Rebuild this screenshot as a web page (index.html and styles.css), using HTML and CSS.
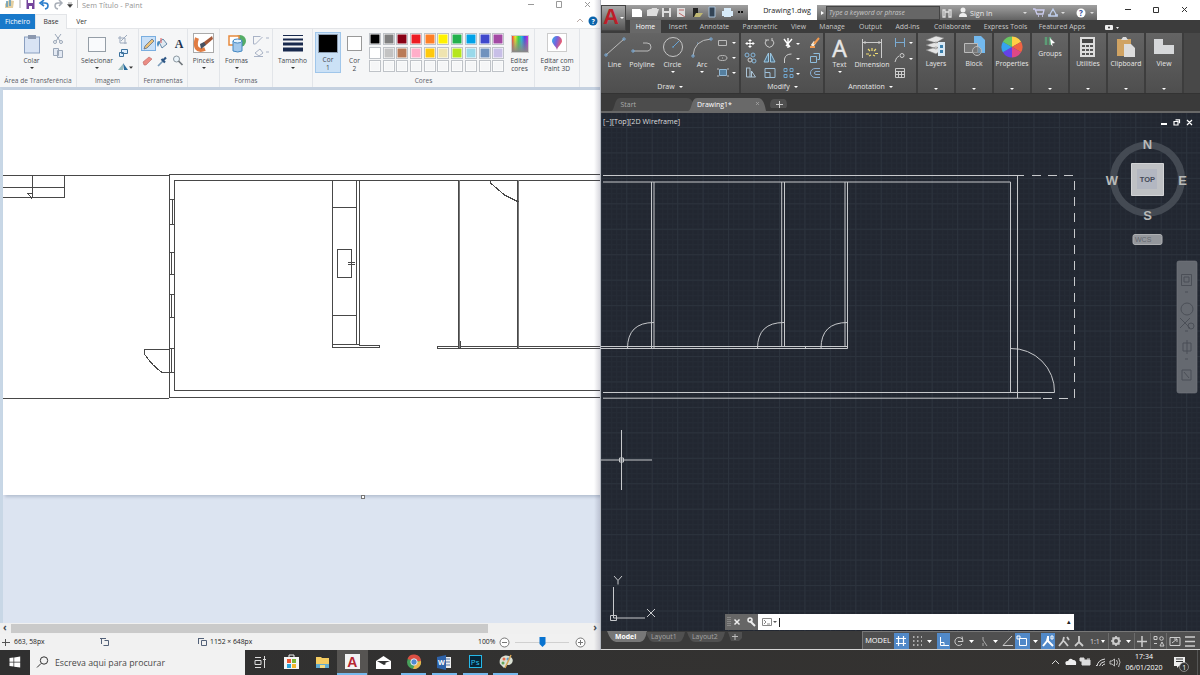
FILE: index.html
```html
<!DOCTYPE html>
<html lang="pt">
<head>
<meta charset="utf-8">
<title>Paint and AutoCAD</title>
<link rel="stylesheet" href="styles.css">
</head>
<body>
<div class="screen">
<section class="paint">
  <header class="p-title">
    <svg width="76" height="14" fill="none"><path d="M5 4l4-4 5 1-1 7H5z" fill="#e4cfa0"/><path d="M7 1v6M10 0v6" stroke="#5c9ac0" stroke-width="1.5"/><path d="M20 0v8" stroke="#aaa"/><rect x="26.500" y="0" width="8" height="9" fill="#74449c"/><path d="M28 0h5v3h-5zM29 6h3v3h-3z" fill="#fff"/><path d="M42 3h3c4 0 4 5 0 6M44 0l-4 3 4 3" stroke="#2d7fcc" stroke-width="1.600"/><path d="M61 3h-3c-4 0-4 5 0 6M59 0l3 3-3 3" stroke="#a9afb8" stroke-width="1.500"/><path d="M67.500 4.500h5l-2.500 3zM68 3h4" fill="#333" stroke="#444" stroke-width=".5"/></svg>
    <span class="p-name">Sem Título - Paint</span>
    <svg class="p-ctl" width="72" height="14" fill="none" stroke="#999"><path d="M0 4.500h6M28.500 1.500h5v6h-5zM57 2l5 5M62 2l-5 5"/></svg>
  </header>
  <nav class="p-tabs"><b>Ficheiro</b><span class="on">Base</span><span>Ver</span><svg width="24" height="15"><path d="M1 8l3-3 3 3" fill="none" stroke="#b9a9a5"/><circle cx="17" cy="7" r="4.500" fill="#0a64ad"/><text x="15.500" y="10" class="q">?</text></svg></nav>
  <div class="p-ribbon">
    <div class="grp"><div class="g2 clip"><div class="tool"><svg width="18" height="22" ><rect x="1.500" y="4" width="15" height="16" fill="#d8e3f4" stroke="#8a9fc0"/><rect x="5" y="2" width="8" height="4" fill="#8b98af"/></svg><em>Colar</em><i class="dn"></i></div><svg width="14" height="40" fill="none" stroke="#9ba7b8"><path d="M4 2l5 7M10 2l-5 7"/><circle cx="4" cy="10" r="1.500"/><circle cx="10" cy="10" r="1.500"/><path d="M2.500 16.500h5v7h-5zM6.500 18.500h5v7h-5z" fill="#e3e9f3"/></svg></div><p>Área de Transferência</p></div>
    <div class="grp"><div class="g2 img"><div class="tool"><svg width="20" height="22"><rect x="1.500" y="4.500" width="17" height="14" fill="#f9fafc" stroke="#345" stroke-dasharray="1 1"/></svg><em>Selecionar</em><i class="dn"></i></div><svg width="18" height="40" fill="none"><path d="M3 4v7h7M1 6h7v6M10 3L4 9" stroke="#9ba9bc"/><path d="M4.500 17.500h6v4h-6zM2.500 20.500h4v4h-4z" stroke="#3b719c" fill="#def"/><path d="M1 38l5-6v6z" fill="#9bb"/><path d="M6 31l5 7H7z" fill="#286b9c"/><path d="M12 34.500h4l-2 2.200z" fill="#333"/></svg></div><p>Imagem</p></div>
    <div class="grp"><div class="tools6">
      <span class="sel"><svg width="14" height="14"><path d="M2 12l1-3 7-7 2 2-7 7z" fill="#eac179" stroke="#52647c" stroke-width=".7"/></svg></span>
      <svg width="14" height="14"><path d="M3 6l4-3 4 5-5 4z" fill="#dfe9f1" stroke="#446f94" stroke-width=".8"/><path d="M2 5q-2 3 0 6l2-5" fill="#4889bd"/><path d="M5 2v5" stroke="#d55"/></svg>
      <b>A</b>
      <svg width="14" height="14"><path d="M2 8l6-5 3 2-6 6H3z" fill="#ea8c84" stroke="#bd6966" stroke-width=".6"/></svg>
      <svg width="14" height="14"><path d="M2 12l5-5" stroke="#7c9dbb" stroke-width="1.700"/><path d="M5.500 5l3.500 3.500M7 6.500l3-3" stroke="#2c5584" stroke-width="2.200"/></svg>
      <svg width="14" height="14" fill="none"><circle cx="5.500" cy="5" r="3" fill="#eaf4fa" stroke="#8a969f"/><path d="M7.500 7l4 4" stroke="#6f767b" stroke-width="1.700"/></svg>
    </div><p>Ferramentas</p></div>
    <div class="grp"><div class="tool"><svg width="22" height="22"><rect x=".5" y=".5" width="20" height="19" fill="#fff" stroke="#aaa"/><path d="M4 5c-3 9 0 14 8 11" stroke="#e17c42" stroke-width="4" fill="none"/><path d="M19 3l-8 6-3 4 5-1 7-6z" fill="#a55939"/><path d="M7 11l4-2 2 3-5 4z" fill="#475161"/></svg><em>Pincéis</em><i class="dn"></i></div><p></p></div>
    <div class="grp"><div class="g2 shp"><div class="tool"><svg width="20" height="22" fill="none"><circle cx="13" cy="8" r="6" fill="#55ad66"/><path d="M2 3h10v9H2z" fill="#fff" stroke="#e78a3e" stroke-width="1.500"/><path d="M6 8h9v10q-4 2-9 0z" fill="#a3c9ec" stroke="#4387c1"/><ellipse cx="10.500" cy="8" rx="4.500" ry="2" fill="#e4f3ff" stroke="#4387c1"/></svg><em>Formas</em><i class="dn"></i></div><svg width="18" height="40" fill="none" stroke="#a9b3c6"><path d="M.5 4.500h7M.5 4v8h2l7-7M13 6h3M2 21l5-4 3 4-4 3zM1 24.500h9M13 20h3"/></svg></div><p>Formas</p></div>
    <div class="grp"><div class="tool"><svg width="22" height="22" stroke="#18294d"><path d="M1 2.500h20"/><path d="M1 6.500h20" stroke-width="2"/><path d="M1 11h20" stroke-width="3"/><path d="M1 16.500h20" stroke-width="4"/></svg><em>Tamanho</em><i class="dn"></i></div><p></p></div>
    <div class="grp"><div class="cores">
      <div class="cor on"><s class="blk"></s><em>Cor<br>1</em></div><div class="cor"><s></s><em>Cor<br>2</em></div>
      <div class="pal"><i style="background:#000"></i><i style="background:#7f7f7f"></i><i style="background:#880015"></i><i style="background:#ed1c24"></i><i style="background:#ff7f27"></i><i style="background:#fff200"></i><i style="background:#22b14c"></i><i style="background:#00a2e8"></i><i style="background:#3f48cc"></i><i style="background:#a349a4"></i><i style="background:#fff"></i><i style="background:#c3c3c3"></i><i style="background:#b97a57"></i><i style="background:#ffaec9"></i><i style="background:#ffc90e"></i><i style="background:#efe4b0"></i><i style="background:#b5e61d"></i><i style="background:#99d9ea"></i><i style="background:#7092be"></i><i style="background:#c8bfe7"></i><i></i><i></i><i></i><i></i><i></i><i></i><i></i><i></i><i></i><i></i></div>
      <div class="cor"><s class="rain"></s><em>Editar<br>cores</em></div>
    </div><p>Cores</p></div>
    <div class="grp"><div class="cor p3d"><svg width="20" height="20"><defs><linearGradient id="pin" x2="1" y2=".4"><stop stop-color="#29b7ed"/><stop offset=".5" stop-color="#7762dc"/><stop offset="1" stop-color="#f25b67"/></linearGradient></defs><rect x=".5" y=".5" width="19" height="18" fill="#fff" stroke="#ccc"/><path d="M10 17c-1-4-5-6-5-9a5 5 0 0 1 10 0c0 3-4 5-5 9z" fill="url(#pin)"/></svg><em>Editar com<br>Paint 3D</em></div><p></p></div>
    <div></div>
  </div>
  <div class="p-work">
    <div class="paper"><svg width="597" height="405" viewBox="3 90 597 405" fill="none" stroke="#484848" shape-rendering="crispEdges">
      <path d="M3 175.500h166M3 187.500h61M3 197.500h61.500v-22M32.500 175v23M28 193.500h4l-4 0 4 5M3 398.500h166"/>
      <path d="M600 174.500H169.500v223H600M600 180.500H174.500v210H600"/>
      <path d="M172.500 199v25M169 199.500h5M169 224.500h5M171.500 252v22M169 252.500h5M169 274.500h5M171.500 294v23M169 294.500h5M169 317.500h5M171.500 348v24M169 348.500h5M169 372.500h5M169 349h-24.500v5q8 12 17 18h8"/>
      <path d="M332.500 180v167h47v-2H359.500V180M356.500 180v164M332 207.500h24M332 315.500h24M332 344.500h27M337.500 249.500h14v28h-14zM348 262.500h7M348 264.500h7M351.500 260v6"/>
      <path d="M458.500 180v168h-21v-2h162.500M517.500 180v168M459 348.500h141M460.500 341v8"/><path d="M459.500 180v168M518.500 180v168" stroke="#777"/>
      <path d="M490.500 180v3l14 12 14 7"/>
    </svg></div><div class="grip"></div>
  </div>
  <div class="p-scroll"><i>‹</i><b></b><i>›</i></div>
  <footer class="p-status"><svg width="10" height="12" stroke="#555" fill="none"><path d="M2 6.500h8M5.500 3v7"/></svg><span>663, 58px</span><svg width="12" height="12" stroke="#536178" fill="none"><path d="M1 2.500h6M2.500 2v6M5.500 4.500h4v5h-5"/></svg><svg width="12" height="12" stroke="#536178" fill="none"><path d="M1 2.500h6M1.500 2v6M4.500 4.500h5v5h-5z"/></svg><span>1152 × 648px</span><i></i><span class="pct">100%</span><svg width="103" height="16" fill="none" stroke="#777"><circle cx="7.500" cy="8.500" r="4.500" fill="#fff"/><path d="M5 8.500h5"/><path d="M18 8.500h54" stroke="#d0d0d0"/><path d="M42.500 3h6v7l-3 3-3-3z" fill="#0873d0" stroke="none"/><circle cx="83.500" cy="8.500" r="4.500" fill="#fff"/><path d="M81 8.500h5M83.500 6v5"/></svg></footer>
</section>

<section class="cad">
  <div class="white-top"></div>
  <header class="c-head">
    <div class="logo"><b>A</b><i class="dn"></i></div>
    <div class="c-bars">
      <div class="qat">
        <svg width="120" height="15" fill="none"><path d="M6 4h8l2 2v6H6z" fill="#fff"/><path d="M21 5h4l1-2h5v8H21zl3-1h9l-2 6H21z" fill="#ddd"/><path d="M36 3h9v9h-9z" fill="#ddd"/><path d="M38 3h5v3h-5zM38 8h5v4h-5z" fill="#777"/><path d="M51 3h8v9h-8z" fill="#ddd"/><path d="M53 5h5M53 8l6 4" stroke="#b66"/><path d="M67 3h5v9h-5z" fill="#222"/><path d="M70 8h7l-3 4h-6z" fill="#c0b873"/><path d="M83 2h6v10h-6z" fill="#345" stroke="#a5bdd5"/><path d="M96 6h11v5H96zM98 3h7v3h-7zM98 9h7v3h-7z" fill="#d7eaf8"/><path d="M112 7h5" stroke="#111" stroke-width="2" stroke-dasharray="2 1"/></svg>
        <div class="doc">Drawing1.dwg</div><i class="rt"></i><div class="find">Type a keyword or phrase</div>
        <svg width="19" height="15" stroke="#ddd" fill="none"><path d="M3 12V5h2v7zM9 12V5h2v7zM5 7h4" stroke-width="1.300"/></svg>
        <svg width="9" height="15" fill="#eee"><circle cx="4" cy="5" r="2.500"/><path d="M0 12q0-4 4-4t4 4z"/></svg><span>Sign In</span>
        <svg width="93" height="15" fill="none"><path d="M19 7h4l-2 2z" fill="#ddd"/><path d="M29 4h2l2 5h6l1-4h-8M34 11h1M38 11h1" stroke="#cce" stroke-width="1.300"/><path d="M49 4l-4 7h8zM44 10h3M51 10h3" stroke="#bdcce9" stroke-width="1.300"/><path d="M57 7h4l-2 2z" fill="#ddd"/><circle cx="77" cy="8" r="4.500" fill="#fff"/><text x="75" y="11" class="hq">?</text><path d="M86 7h4l-2 2z" fill="#ddd"/></svg>
        <svg class="wctl" width="103" height="15" fill="none" stroke="#333"><path d="M28 4.500h6M56.500 2.500h5v5h-5zM85 2l5 5M90 2l-5 5"/></svg>
      </div>
      <nav class="c-tabs"><span class="on">Home</span><span>Insert</span><span>Annotate</span><span>Parametric</span><span>View</span><span>Manage</span><span>Output</span><span>Add-ins</span><span>Collaborate</span><span>Express Tools</span><span>Featured Apps</span><svg width="20" height="12"><rect x="2" y="4" width="8" height="5" rx="1" fill="#eee"/><circle cx="6" cy="6.500" r="1" fill="#333"/><path d="M13 6h3l-1.500 2z" fill="#eee"/></svg></nav>
    </div>
  </header>
  <div class="c-ribbon">
    <div class="panel"><div class="pc draw">
      <div class="tl"><svg width="22" height="23" fill="none" stroke="#bbb"><path d="M2 19L20 3"/><path d="M1 18h2v2H1zM19 2h2v2h-2z" stroke="#79a6cf"/></svg><em>Line</em></div>
      <div class="tl"><svg width="24" height="23" fill="none" stroke="#bbb"><path d="M3 15h15q3-1 3-4 0-4-4-4h-4"/><path d="M2 14h2v2H2z" stroke="#79a6cf"/></svg><em>Polyline</em></div>
      <div class="tl"><svg width="24" height="23" fill="none" stroke="#c5c5c5"><circle cx="12" cy="11" r="9.500"/><path d="M12 11l6-6M11 11h2" stroke="#67a3d4"/></svg><em>Circle</em><i class="dn"></i></div>
      <div class="tl"><svg width="22" height="23" fill="none" stroke="#bbb"><path d="M2 20Q3 4 20 3"/><path d="M1 19h2v2H1zM19 2h2v2h-2zM6 7h1" stroke="#79a6cf"/></svg><em>Arc</em><i class="dn"></i></div>
      <div class="small"><svg width="24" height="46" fill="none" stroke="#bbb"><path d="M3.500 7.500h8v5h-8z"/><ellipse cx="7.500" cy="25" rx="4.500" ry="2.500"/><path d="M7 25h1"/><path d="M4.500 36.500h7v6h-7z" fill="#557f9f" stroke="#91b7d4"/><path d="M2 36h2M12 36h2M2 43h2M12 43h2" /><path d="M17 9h4l-2 2zM17 24h4l-2 2zM17 39h4l-2 2z" fill="#fff" stroke="none"/></svg></div>
    </div><p>Draw <i class="dn"></i></p></div>
    <div class="panel"><div class="pc"><svg width="83" height="47" fill="none" stroke="#ccc">
      <path d="M4.500 10.500h9M9 6v9M7.500 7.500h3M7.500 13.500h3M6 9v3M12 9v3" stroke="#fff"/><path d="M25.500 7a4.200 4.200 0 1 0 6 0M24 7h4M31 5v3"/><path d="M43 6l6 8M51 6l-6 7M47 5v10" stroke="#fff" stroke-width="1.400"/><path d="M71 13l3-4" stroke="#f4ead8" stroke-width="3"/><path d="M73 11l5-6M69 14h5" stroke="#f19a50" stroke-width="2"/>
      <circle cx="6" cy="22" r="2" stroke="#85b7dc"/><circle cx="12" cy="22" r="2" stroke="#85b7dc"/><circle cx="9" cy="27" r="2"/><circle cx="13" cy="28" r="2" stroke="#85b7dc"/><path d="M27.500 20v9H23zM29.500 20v9H34z" fill="#50738c" stroke="#9bc7e1"/><path d="M43.500 30v-4q1-5 7-5"/><path d="M69.500 23.500h6v6h-6zM72.500 20.500h6v6h-2" stroke="#8ebddd"/>
      <path d="M5.500 35v9h9l-4-6v6M5 35h4v9" stroke="#aac3d5"/><path d="M24 35.500h10v9H24zM24 39.500h5v5" stroke="#9cbfd8"/><path d="M43 35.500h3v3h-3zM49 35.500h3v3h-3zM43 41.500h3v3h-3zM49 41.500h3v3h-3z" stroke="#70a7d0"/><path d="M79 35.500h-5a4.500 4.500 0 0 0 0 9h5M79 38.500h-4a1.500 1.500 0 0 0 0 3h4" stroke="#8aadd0"/>
      <path d="M55 10h4l-2 2zM55 25h4l-2 2zM55 40h4l-2 2z" fill="#fff" stroke="none"/></svg></div><p>Modify <i class="dn"></i></p></div>
    <div class="panel"><div class="pc anno"><div class="tl"><b>A</b><em>Text</em><i class="dn"></i></div><div class="tl"><svg width="22" height="23" fill="none" stroke="#ccc"><path d="M1.500 3v19M20.500 3v19M2 6.500h18M4 5v3M18 5v3"/><path d="M11 12v3M7 13l2 2M15 13l-2 2M5 18h3M14 17.500h3M8 20l2-1M14 20l-2-1" stroke="#f1de72" stroke-width="1.200"/></svg><em>Dimension</em></div><div class="small"><svg width="24" height="46" fill="none" stroke="#ccc"><path d="M5.500 5v9M14.500 5v9M6 9.500h8" stroke="#7aabd2"/><path d="M5 29q1-5 4-6"/><circle cx="12" cy="22.500" r="2"/><path d="M5.500 35.500h9v9h-9zM5 38.500h9M5 41.500h9M8.500 38v6M11.500 38v6"/><path d="M19 9h4l-2 2zM19 25h4l-2 2z" fill="#fff" stroke="none"/></svg></div></div><p>Annotation <i class="dn"></i></p></div>
    <div class="panel one"><svg width="26" height="24"><path d="M3 6l10-4 8 2-8 5zM3 11l10-3 7 2-7 5zM3 16l10-3 7 2-7 5z" fill="#e4e4e4" stroke="#777" stroke-width=".6"/><path d="M15 8h7v14h-7z" fill="#d9e8f3"/><path d="M17 11h3v3h-3zM17 16h3v3h-3z" fill="#397fac"/></svg><em>Layers</em><i class="dn"></i></div>
    <div class="panel one"><svg width="26" height="24"><path d="M13 2h7l4 4v13h-11z" fill="#73b9ee"/><path d="M3.500 9.500h13v9h-13z" fill="#777" stroke="#bbb"/><circle cx="16" cy="17" r="4.500" fill="#777" fill-opacity=".6" stroke="#bbb"/></svg><em>Block</em><i class="dn"></i></div>
    <div class="panel one"><svg width="26" height="24"><g transform="translate(13 13)"><path d="M0 0V-10.500A10.500 10.500 0 0 1 9.100-5.250Z" fill="#ffd045"/><path d="M0 0L9.100-5.250A10.500 10.500 0 0 1 9.100 5.250Z" fill="#f06443"/><path d="M0 0L9.100 5.250A10.500 10.500 0 0 1 0 10.500Z" fill="#df4787"/><path d="M0 0V10.500A10.500 10.500 0 0 1-9.100 5.250Z" fill="#6541e8"/><path d="M0 0L-9.100 5.250A10.500 10.500 0 0 1-9.100-5.250Z" fill="#35a3ee"/><path d="M0 0L-9.100-5.250A10.500 10.500 0 0 1 0-10.500Z" fill="#68c662"/></g></svg><em>Properties</em><i class="dn"></i></div>
    <div class="panel one groups"><svg width="26" height="14"><path d="M9 3v8M13 3v8" stroke="#5c9d76" stroke-width="2.500"/><path d="M13 4l5 5-3 .500 1 3-2-2z" fill="#fff"/></svg><em>Groups</em><i class="dn"></i></div>
    <div class="panel one"><svg width="26" height="24"><path d="M5 3h15v20H5z" fill="#ddd"/><path d="M7 5h11v4H7z" fill="#454545"/><path d="M7 12h11M7 16h11M7 20h11" stroke="#555" stroke-width="2" stroke-dasharray="3 1"/></svg><em>Utilities</em><i class="dn"></i></div>
    <div class="panel one"><svg width="26" height="24"><path d="M4 5h14v17H4z" fill="#d0a363"/><path d="M8 6l2-3h3l2 3z" fill="#ddd"/><path d="M11 10h7l4 4v9H11z" fill="#ddd"/></svg><em>Clipboard</em><i class="dn"></i></div>
    <div class="panel one"><svg width="26" height="24"><path d="M3 5h9v6h11v9H3z" fill="#d6d8da"/></svg><em>View</em><i class="dn"></i></div>
    <div></div>
  </div>
  <div class="files"><svg width="190" height="15"><path d="M10 15c4 0 3-13 9-13h67q4 0 6 5l4 8z" fill="#4c4c4c"/><path d="M87 15c4 0 3-13 9-13h61q6 0 8 13z" fill="#696969"/><path d="M169 10q0-7 4-7h10q3 0 3 7l-1 2h-15z" fill="#505050"/><text x="19.500" y="11">Start</text><text x="96" y="11" class="lit">Drawing1*</text><path d="M155 6l3 3M158 6l-3 3" stroke="#aaa" stroke-width=".7"/><path d="M175 8.500h7M178.500 5v7" stroke="#ccc"/></svg></div>
  <main class="model">
    <svg class="plan" width="599" height="518" viewBox="601 113 599 518" fill="none" stroke="#c7c9cc">
      <defs><pattern id="minor" width="5.090" height="5.090" patternUnits="userSpaceOnUse" x="651.700" y="203.300"><path d="M0 .5h5.090M.5 0v5.090" stroke="#252b35"/></pattern><pattern id="major" width="25.450" height="25.450" patternUnits="userSpaceOnUse" x="651.700" y="203.300"><path d="M0 .5h26M.5 0v26" stroke="#2c333d"/></pattern></defs>
      <path d="M601 113h599v518H601z" fill="url(#minor)" stroke="none"/><path d="M601 113h599v518H601z" fill="url(#major)" stroke="none"/>
      <path d="M603 175.500h421M603 182h407.500v210.500M1017.500 175v223M603 392.500h451.500a43 43 0 0 0-44-44M603 398.200h438"/>
      <path d="M1032 175.500h42.500v223H1041" stroke-dasharray="9 7"/>
      <path d="M651.500 182v166M654 182v166M781.700 182v164M784.500 182v164M845 182v164M847.500 182v166.500H601M601 346.500h246M805.500 346v3M627.500 348.500q0-26 26.500-26M757.500 348.500q0-26 26.500-26M821 348.500q0-26 26.500-26"/>
      <path d="M621.500 430v60M591 460h61M619.500 458h4v4h-4z"/>
      <path d="M613.500 587v31H645M610.500 615.500h6v5h-6zM614 576l4 4.500 4-4.500M618 580.500v4M647 609l8 8M655 609l-8 8"/>
      <circle cx="1147.500" cy="179" r="34" stroke="#444a53" stroke-width="7"/>
      <path d="M1131.500 163.500h32v32h-32z" fill="#bfc1c4" stroke="#d3d4d6"/><path d="M1137 169h20v20h-20z" fill="#b3b7c1" stroke="none"/>
      <g class="compass"><text x="1147.500" y="149">N</text><text x="1147.500" y="219.500">S</text><text x="1112" y="184.500">W</text><text x="1182.500" y="184.500">E</text></g>
      <text x="1147.500" y="182" class="cube">TOP</text><rect x="1133" y="234.500" width="29" height="10" rx="2" fill="#94979c" stroke="#aeb0b3"/><text x="1135" y="241.500" class="wcs">WCS</text>
      <rect x="1177" y="261" width="20" height="132" rx="2" fill="#656970" stroke="#777b81" stroke-width=".6"/>
      <g stroke="#4b4f57"><path d="M1181.500 274.500h10v11h-10zM1184 277h5v5h-5zM1185 292h3M1185 331h3M1185 359h3"/><circle cx="1187" cy="309" r="6"/><path d="M1180 318l10 10M1190 318l-10 10M1183 343h8v8h-8zM1187 340v14M1182 370h9v10h-9zM1184 372l5 6"/><circle cx="1191" cy="326" r="3"/></g>
      <path d="M1161 124h6" stroke="#fff" stroke-width="2"/><path d="M1174 121.500h4v3.500h-4zM1175.500 119.800h4v3.500M1187 120l5 5M1192 120l-5 5" stroke="#fff" stroke-width="1.200"/>
      <text x="603" y="124" class="vp">[−][Top][2D Wireframe]</text>
    </svg>
    <div class="cmd"><svg width="33" height="16" fill="none" stroke="#eee"><path d="M3 3v10M5 3v10" stroke="#aaa" stroke-dasharray="1 1"/><path d="M9.500 5.500l5 5M14.500 5.500l-5 5" stroke-width="1.500"/><path d="M25 7l5 5" stroke-width="2"/><circle cx="25" cy="6" r="2" stroke-width="1.500"/></svg><div><svg width="24" height="16" fill="none" stroke="#888"><path d="M4.500 4.500h9v7h-9zM6 6l2 2-2 2M9 10h3"/><path d="M15 7h4l-2 2z" fill="#555" stroke="none"/><path d="M21.500 4v9" stroke="#222"/></svg><i>▴</i></div></div>
  </main>
  <footer class="c-foot">
    <svg width="150" height="18"><path d="M6 0h40q-2 11-7 11H15q-5 0-9-11z" fill="#777"/><path d="M45 1h39q-2 10-7 10H53q-5 0-8-10zM86 1h38q-2 10-7 10H94q-5 0-8-10z" fill="#505050"/><path d="M127 1h14v6l-3 3h-8z" fill="#505050"/><text x="14" y="8" class="model-tab">Model</text><text x="50" y="8">Layout1</text><text x="91" y="8">Layout2</text><path d="M131 5.500h6M134 3v6" stroke="#bbb"/></svg>
    <div class="tray-cad"><b>MODEL</b><svg width="307" height="18" fill="none" stroke="#ccc">
      <path d="M1 1h15v16H1zM44 1h13v16H44zM122 1h15v16h-15zM148 1h14v16h-14z" fill="#5189c8" stroke="none"/><path d="M5.500 4v10M10.500 4v10M3 6.500h10M3 11.500h10" stroke="#fff" stroke-width="1.200"/><path d="M20 5h9M20 9h9M20 13h9" stroke-width="1.500" stroke-dasharray="1.500 2.500"/><path d="M47.500 5v8.500H56M48 10.500h3v3" stroke="#fff"/><path d="M69 7a4 4 0 1 0 0 5M65 9.500h5l-1-5"/><path d="M90 5v3l4 6M90 11v3" stroke="#aaa"/><path d="M119 4l-9 9.500h10"/><path d="M126.500 6.500h7v7h-7zM124 4h3v3h-3z" stroke="#fff"/>
      <path d="M155 5l-1 4-4 5M155 9l5 5M155 4v5" stroke="#fff" stroke-width="2"/><path d="M158 4h2v3h-2z" stroke="#fff"/><path d="M171 5l-1 4-4 5M171 9l4 5M174 5l2 3" stroke-width="1.800"/><path d="M186 4v6l-4 4M186 10l4 4" stroke-width="1.800"/>
      <circle cx="223" cy="9" r="3" stroke-width="2"/><path d="M223 4v2M223 12v2M218 9h2M226 9h2M219.500 5.500l1.500 1.500M226.500 5.500L225 7M219.500 12.500L221 11M226.500 12.500L225 11" stroke-width="1.700"/><path d="M244 9.500h10M249 4v11" stroke-width="1.500"/><path d="M261 4.500h3v3h-3zM261 11.500h3M269 10l-2 4h4z"/><circle cx="268.500" cy="6.500" r="1.800"/><path d="M277 5.500h10v8h-10zM279 11l5-4M281 7h3v3"/><path d="M292 5h10M292 9.500h10M292 14h10" stroke-width="1.600"/>
      <path d="M34 8h5l-2.500 3zM76 8h5l-2.500 3zM100 8h5l-2.500 3zM140 8h5l-2.500 3zM208 8h4l-2 3zM233 8h5l-2.500 3z" fill="#fff" stroke="none"/><path d="M215.500 1v16M241.500 1v16M257.500 1v16M273.500 1v16" stroke="#777" stroke-width=".7"/><text x="197" y="12" class="ratio">1:1</text>
    </svg></div>
  </footer>
</section>

<footer class="taskbar">
  <div class="start"><svg width="30" height="25" fill="#fff"><path d="M9.500 8l4-.5v4.200h-4zM14.200 7.400l6-.8v5.100h-6zM9.500 12.400h4v4.200l-4-.6zM14.200 12.400h6v5.200l-6-.8z"/></svg></div>
  <div class="search"><svg width="25" height="25" fill="none" stroke="#333"><circle cx="14" cy="10.500" r="3.700"/><path d="M11 13.500l-4 4"/></svg><span>Escreva aqui para procurar</span></div>
  <div class="apps">
    <a><svg width="30" height="25" fill="none" stroke="#ddd"><path d="M10 7.500h6M10 10.500h6v4h-6zM10 17.500h6M19.500 6v12M18 9.500h3"/></svg></a>
    <a><svg width="30" height="25"><path d="M8 7h15v12H8z" fill="#f5f5f5"/><path d="M13 7V5h5v2" stroke="#eee" fill="none"/><path d="M11 9h4v4h-4z" fill="#ee5632"/><path d="M16 9h4v4h-4z" fill="#7bb536"/><path d="M11 14h4v4h-4z" fill="#2aa6dd"/><path d="M16 14h4v4h-4z" fill="#f4b72d"/></svg></a>
    <a><svg width="30" height="25"><path d="M9 7h5l1 1h7v10H9z" fill="#f5cc61"/><path d="M9 14h13v4H9z" fill="#61acd1"/><path d="M13 15h5v3h-5z" fill="#f4da81"/></svg></a>
    <a class="run on"><span class="ca">A</span></a>
    <a><svg width="30" height="25"><path d="M8 11l7.500-5 7.500 5v8H8z" fill="#fff"/><path d="M9 11h13l-5 2 1 1-2 1z" fill="#333"/></svg></a>
    <a class="run"><svg width="30" height="25"><circle cx="15" cy="12" r="7" fill="#47a15b"/><path d="M8.500 9A7 7 0 0 1 22 11h-7z" fill="#dc4f44"/><path d="M22 11a7 7 0 0 1-8 8l3-7z" fill="#e9b54c"/><circle cx="15" cy="12" r="3.200" fill="#4e88d1" stroke="#eee"/></svg></a>
    <a class="run"><svg width="30" height="25"><path d="M15 7h7v11h-7z" fill="#eee"/><path d="M8 7l9-2v15l-9-2z" fill="#2e62a8"/><path d="M17 9h4M17 12h4M17 15h4" stroke="#57a"/><text x="9" y="15" class="w">W</text></svg></a>
    <a class="run"><span class="ps">Ps</span></a>
    <a class="run"><svg width="30" height="25"><path d="M9 14c-2-7 5-10 9-8 7 3 3 10-2 9l-3 3z" fill="#dbe0d4"/><circle cx="13" cy="9" r="1.500" fill="#e76a49"/><circle cx="17" cy="9" r="1.500" fill="#5c9bce"/><circle cx="12" cy="13" r="1.500" fill="#63a55b"/><path d="M20 5l-6 13" stroke="#d6a456" stroke-width="1.500"/></svg></a>
  </div>
  <svg class="sys" width="74" height="25" fill="none" stroke="#ddd"><path d="M2 14l3.500-3.500L9 14"/><path d="M16 15q-2-4 2-4 2-4 5-1 4 0 3 5z" fill="#eee" stroke="none"/><path d="M32 10h8v5h-8zM30 8h4v3h-4zM37 9h3" fill="#ddd"/><path d="M47 16q1-6 8-7M49.500 16q1-4 5.500-4.500M52 16q1-2 3-2M46 15l1 1"/><path d="M60 11h2l2.500-2v7L62 14h-2zM66.500 10q2 2.500 0 5M68.500 8q3 4 0 9" stroke-width=".8"/></svg>
  <time>17:34<br>06/01/2020</time>
  <svg width="36" height="25"><path d="M10 7h11v9H15l-2 2v-2h-3z" fill="#eee"/><path d="M12 9h7M12 11.500h7" stroke="#333"/><circle cx="20" cy="17" r="4.500" fill="#333" stroke="#aaa" stroke-width=".7"/><text x="18.200" y="19.700" class="n1">1</text><path d="M33.500 0v25" stroke="#555"/></svg>
</footer>
</div>
</body>
</html>
```
FILE: styles.css
```css
* { box-sizing: border-box; }
body { margin: 0; background: #fff; font: 6.6px/8px "Open Sans", "Noto Sans", sans-serif; overflow: hidden; }
svg { display: block; flex: none; }
em, i, s { font-style: normal; text-decoration: none; }
p { margin: 0; }
.screen { width: 1200px; height: 675px; display: grid; grid-template: 650px 25px / 600px 600px; }
.dn { display: block; width: 0; height: 0; border: 2px solid transparent; border-top: 2.5px solid #333; border-bottom: 0; }

/* Paint */
.paint { position: relative; display: flex; flex-direction: column; background: #fff; color: #44474d; min-width: 0; overflow: hidden; white-space: nowrap; }
.paint::after { content: ""; position: absolute; top: 0; right: 0; width: 6px; height: 650px; background: linear-gradient(90deg, transparent, rgba(60, 60, 90, .2)); }
.p-title { height: 14px; display: flex; color: #949494; }
.p-name { margin-left: 1px; padding-left: 4px; border-left: 1px solid #bbb; height: 8px; line-height: 10px; font-size: 7.3px; letter-spacing: .05px; }
.p-ctl { margin-left: auto; }
.p-tabs { height: 15px; display: grid; grid-template-columns: 35px 32px 29px 1fr; border-bottom: 1px solid #e3e5e8; text-align: center; line-height: 15px; color: #333; font-size: 6.8px; }
.p-tabs b { background: #1979ca; color: #fff; font-weight: 400; }
.p-tabs .on { background: #f5f6f7; border: 1px solid #e3e5e8; border-bottom: 0; line-height: 13px; height: 15px; }
.p-tabs svg { justify-self: end; }
.q { font-size: 7px; font-weight: 700; fill: #fff; }
.p-ribbon { height: 58px; background: #f5f6f7; display: grid; grid-template-columns: 77px 62px 49px 32px 53px 40px 222px 45px 20px; }
.grp { border-right: 1px solid #e2e5e9; display: grid; grid-template-rows: 47px 11px; text-align: center; min-width: 0; }
.grp p { color: #5c6168; display: flex; justify-content: center; line-height: 9px; }
.tool { display: flex; flex-direction: column; align-items: center; padding-top: 4px; }
.tool em { line-height: 12px; }
.g2 { display: grid; }
.g2 > svg { margin-top: 3px; }
.clip { grid-template-columns: 43px 14px; padding-left: 10px; }
.clip > svg { margin-left: -9px; }
.clip > svg { margin-left: -2px; }
.img { grid-template-columns: 40px 18px; }
.shp { grid-template-columns: 33px 18px; }
.tools6 { display: grid; grid-template-columns: 14px 14px 16px; grid-template-rows: 17px 17px; gap: 1px; padding: 7px 0 0 2px; }
.tools6 .sel { background: #c9e0f7; border: 1px solid #79aee0; height: 15px; width: 15px; }
.tools6 b { font: bold 12px/16px "Liberation Serif", serif; color: #20324d; }
.cores { display: grid; grid-template-columns: 26px 27px 138px 27px; padding: 3px 0 0 2px; }
.cor { display: flex; flex-direction: column; align-items: center; padding-top: 3px; height: 41px; }
.cor.on { background: #cbe1f6; border: 1px solid #a0c6ea; padding-top: 1px; }
.cor s { width: 15px; height: 15px; border: 1px solid #999; background: #fff; }
.cor .blk { width: 20px; height: 20px; background: #000; margin-bottom: 3px; border: 1px solid #8d9db0; }
.cor:not(.on) s { margin: 1px 0 6px; }
.cor .rain { width: 18px; height: 18px; margin: 0 0 4px !important; border-color: #ccc; background: linear-gradient(0deg, #888, transparent), linear-gradient(90deg, #f33, #ee2, #3d4, #2bd, #44e, #d2d); }
.p3d { padding-top: 4px; height: 44px; }
.p3d svg { margin-bottom: 4px; }
.pal { display: grid; grid-template-columns: repeat(10, 12px); grid-template-rows: repeat(3, 12px); gap: 1.7px; padding: 1px 0 0 1px; }
.pal i { border: 1px solid #bfc3c8; box-shadow: inset 0 0 0 .5px #fff; }
.p-work { height: 536px; background: #dce4f1; border-top: 3px solid #c5d1e0; border-left: 3px solid #c8d7e6; }
.paper { background: #fff; height: 405px; width: 597px; box-shadow: 2px 2px 3px #b4bfd0; }
.grip { width: 4px; height: 4px; margin: 0 0 0 358px; border: 1px solid #777; background: #fff; }
.p-scroll { height: 11px; display: grid; grid-template-columns: 11px 477px 1fr; background: #f0f0f0; }
.p-scroll b { background: #cacaca; margin: 1px 0; }
.p-scroll i { font-size: 10px; line-height: 9px; padding-left: 3px; font-weight: 700; }
.p-scroll i:last-child { text-align: right; padding-right: 3px; }
.p-status { height: 16px; background: #f1f1f1; display: grid; grid-template-columns: 14px 85px 98px 13px 82px 1fr 28px 103px; align-items: center; color: #222; font-size: 6.8px; }
.pct { padding-left: 9px; }

/* AutoCAD */
.cad { background: #3c3c3c; border-left: 1px solid #b4b8c0; display: flex; flex-direction: column; color: #e7e7e7; min-width: 0; overflow: hidden; white-space: nowrap; }
.white-top { height: 5px; background: #fff; }
.c-head { height: 28px; display: grid; grid-template-columns: 25px 574px; }
.logo { height: 26px; background: linear-gradient(#aaa, #555); border: 1px solid #444; display: flex; align-items: center; }
.logo b { font: bold 22px/20px "Liberation Sans", sans-serif; color: #bd1e28; padding: 0 0 3px 1px; }
.logo .dn { border-top-color: #244; margin-left: 1px; }
.qat { height: 15px; display: grid; grid-template-columns: 122px 69px 9px 114px 19px 11px 34px 93px 103px; align-items: center; background: linear-gradient(#a0a0a0, #626262); font-size: 7.2px; }
.qat .doc { background: #fff; color: #222; height: 15px; text-align: center; padding-left: 9px; line-height: 11px; }
.qat .rt { border: 2.5px solid transparent; border-left: 3px solid #fff; width: 0; margin-left: 4px; }
.find { background: #666; border: 1px solid #444; color: #c6c6c6; font-style: italic; line-height: 12px; padding-left: 2px; height: 14px; font-size: 6.7px; }
.wctl { background: #fff; }
.hq { font: bold 8px "Open Sans", sans-serif; fill: #2c4ca0; stroke: none; }
.c-tabs { height: 13px; display: grid; grid-template-columns: 4px 31px 34px 39px 52px 25px 42px 35px 39px 51px 55px 58px 40px; line-height: 14px; color: #c8c8c8; text-align: center; font-size: 6.85px; }
.c-tabs .on { grid-column: 2; background: #686868; color: #fff; }
.c-tabs svg { margin: 1px 0 0 12px; }
.c-ribbon { height: 61px; display: grid; grid-template-columns: 140px 84px 93px repeat(7, 38px) 1fr; background: #484848; border-bottom: 1px solid #333; }
.panel { background: linear-gradient(#646464, #4e4e4e); border-right: 2px solid #3d3d3d; display: grid; grid-template-rows: 48px 12px; min-width: 0; }
.panel p { display: flex; align-items: center; justify-content: center; gap: 4px; font-size: 7px; padding-bottom: 0; }
.cad .dn { border-top-color: #fff; }
.pc { display: grid; }
.draw { grid-template-columns: 27px 28px 33px 26px 24px; }
.anno { grid-template-columns: 29px 36px 25px; }
.tl { display: flex; flex-direction: column; align-items: center; padding-top: 3px; font-size: 7px; }
.tl em { line-height: 8px; margin-top: 2px; }
.tl b { font: 23px/18px "Open Sans", sans-serif; height: 23px; padding-top: 3px; -webkit-text-stroke: .5px #e7e7e7; }
.tl .dn { margin-top: 2px; }
.panel.one { display: flex; flex-direction: column; align-items: center; padding-top: 1px; }
.one svg { margin-bottom: 2px; }
.one em { line-height: 8px; font-size: 6.8px; }
.one .dn { margin: auto 0 3px; }
.files { height: 19px; background: #3a3a3a; border-bottom: 2px solid #686868; padding-top: 2px; font-size: 7px; }
.files text { fill: #aaa; }
.files .lit { fill: #fff; }
.model { position: relative; height: 518px; background: #222731; }
.model text { stroke: none; fill: #dedede; }
.model .compass { font: bold 13px "Liberation Sans", sans-serif; text-anchor: middle; }
.model .compass text { fill: #b9bab8; }
.model .cube { font: bold 7.5px "Liberation Sans", sans-serif; fill: #444a57; text-anchor: middle; }
.model .wcs { font: 7px "Liberation Sans", sans-serif; fill: #656970; }
.vp { font: 7.15px "Open Sans", sans-serif; }
.cmd { position: absolute; left: 124px; bottom: 1px; width: 349px; height: 16px; display: grid; grid-template-columns: 33px 1fr; background: #666; }
.cmd div { background: #fff; display: flex; justify-content: space-between; color: #222; }
.cmd div i { padding: 4px 3px; }
.c-foot { height: 19px; display: flex; justify-content: space-between; background: #3a3a3a; border-bottom: 1px solid #d5d5d5; }
.c-foot text { fill: #a5a5a5; font-size: 6.9px; }
.c-foot .model-tab { fill: #fff; font-weight: 700; }
.c-foot .ratio { fill: #ddd; stroke: none; font-size: 7px; }
.tray-cad { display: grid; grid-template-columns: 30px 307px; background: #505050; border: 1px solid #777; border-width: 1px 0 0 1px; }
.tray-cad b { font-weight: 400; font-size: 7.4px; line-height: 17px; text-align: center; color: #fff; }

/* Taskbar */
.taskbar { grid-column: 1 / 3; background: linear-gradient(90deg, #303030, #353331); display: grid; grid-template-columns: 30px 215px 1fr 74px 40px 36px; color: #fff; }
.search { background: #f2f2f2; display: flex; align-items: center; color: #484848; font-size: 8.75px; }
.apps { display: grid; grid-template-columns: repeat(9, 30.7px); }
.apps a { display: flex; justify-content: center; height: 25px; }
.run { background: linear-gradient(#76b9ed, #76b9ed) center bottom / 25px 2px no-repeat; }
.run.on { background-color: #565452; background-size: 30px 2px; }
.ca { width: 15px; height: 15px; margin-top: 4px; background: #f3f3f3; color: #b62732; font: bold 14px/16px "Liberation Sans", sans-serif; text-align: center; }
.ps { width: 13px; height: 13px; margin-top: 5px; background: #062437; border: 1px solid #26b9e9; color: #31c5f0; font: 8px/11px "Open Sans", sans-serif; text-align: center; }
.w { font: bold 7px "Open Sans", sans-serif; fill: #fff; }
time { font-size: 7px; line-height: 11px; padding-top: 1px; text-align: center; white-space: nowrap; }
.n1 { font-size: 7px; fill: #fff; }
```
